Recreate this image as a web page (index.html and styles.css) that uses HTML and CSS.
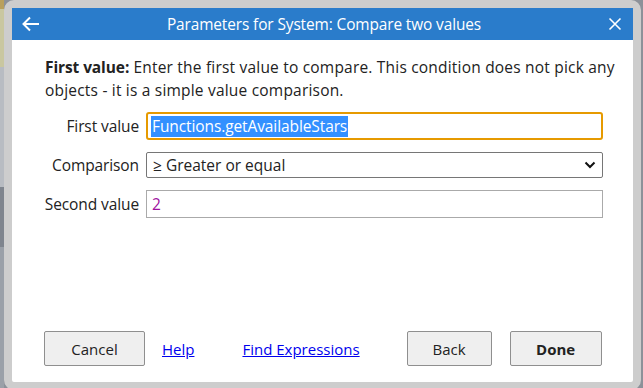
FILE: index.html
```html
<!DOCTYPE html>
<html lang="en">
<head>
  <meta charset="UTF-8">
  <title>Parameters for System: Compare two values</title>
  <link rel="stylesheet" href="styles.css">
</head>
<body>
  <div class="backdrop">
    <div class="strip"><i class="s1"></i><i class="s2"></i><i class="s3"></i><i class="s4"></i></div>
    <div class="frame">
      <div class="dialog">
        <header class="titlebar">
          <svg class="back" width="18" height="16" viewBox="0 0 18 16"><path d="M17 8H2M8 1.5L1.5 8 8 14.5" fill="none" stroke="#fff" stroke-width="2"/></svg>
          <h1>Parameters for System: Compare two values</h1>
          <svg class="close" width="14" height="14" viewBox="0 0 14 14"><path d="M1.5 1.5l11 11M12.5 1.5l-11 11" fill="none" stroke="#fff" stroke-width="1.6"/></svg>
        </header>

        <p class="desc"><b>First value:</b> Enter the first value to compare. This condition does not pick any objects - it is a simple value comparison.</p>

        <div class="params">
          <label>First value</label>
          <div class="field focused"><span class="sel">Functions.getAvailableStars</span></div>
          <label>Comparison</label>
          <div class="field combo">
            <span>≥ Greater or equal</span>
            <svg width="12" height="8" viewBox="0 0 12 8"><path d="M1.5 1.5L6 6l4.5-4.5" fill="none" stroke="#111" stroke-width="2"/></svg>
          </div>
          <label>Second value</label>
          <div class="field plain"><span class="num">2</span></div>
        </div>

        <footer class="buttons">
          <button class="btn cancel">Cancel</button>
          <a href="#" class="link help">Help</a>
          <a href="#" class="link">Find Expressions</a>
          <button class="btn back-btn">Back</button>
          <button class="btn done">Done</button>
        </footer>
      </div>
    </div>
  </div>
</body>
</html>
```
FILE: styles.css
```css
html, body {
  margin: 0;
  height: 100%;
  overflow: hidden;
}

body {
  font-family: "Open Sans", "Noto Sans", sans-serif;
  background: #8c9199;
  color: #222;
}

.backdrop {
  display: flex;
  height: 388px;
}

.strip {
  width: 4px;
  display: flex;
  flex-direction: column;
  background: #9aa0a8;
}

.strip i { display: block; }
.strip .s1 { height: 9px; background: #b9a05c; }
.strip .s2 { height: 58px; background: #c9c7a0; }
.strip .s3 { height: 120px; background: #b8bcc2; }
.strip .s4 { height: 60px; background: #7f858e; }

.frame {
  width: 621px;
  height: 374px;
  border: 8px solid #cdcdcd;
  border-radius: 10px;
  background: #fff;
}

.dialog {
  height: 100%;
  display: flex;
  flex-direction: column;
}

.titlebar {
  height: 32px;
  background: #2a7ccb;
  display: flex;
  align-items: center;
  padding: 0 8px 0 10px;
}

.titlebar h1 {
  flex: 1;
  margin: 0;
  text-align: center;
  font-size: 15.4px;
  font-weight: normal;
  color: #fff;
  letter-spacing: -0.1px;
}

.titlebar .close { margin-right: 3px; }

.desc {
  margin: 16px 6px 0 33px;
  font-size: 15.5px;
  line-height: 23px;
  letter-spacing: 0.2px;
}

.desc b { letter-spacing: -0.1px; }

.params {
  display: grid;
  grid-template-columns: 127px 457px;
  column-gap: 7px;
  row-gap: 12px;
  margin-top: 10px;
  align-items: center;
  font-size: 15.5px;
}

.params label {
  text-align: right;
  letter-spacing: -0.1px;
}

.field {
  box-sizing: border-box;
  height: 28px;
  display: flex;
  align-items: center;
  padding: 0 5px;
  border: 1px solid #aaa;
  background: #fff;
}

.field.focused {
  border: 2px solid #e69a00;
  border-radius: 3px;
  padding: 0 3px;
}

.sel {
  background: #3390ff;
  color: #fff;
  line-height: 21px;
  padding: 0 1px;
  letter-spacing: -0.1px;
}

.field.combo {
  height: 26px;
  border: 1px solid #767676;
  border-radius: 2px;
  justify-content: space-between;
  padding: 0 6px 0 6px;
}

.num { color: #a0119f; }

.buttons {
  margin-top: auto;
  margin-bottom: 16px;
  display: flex;
  align-items: center;
  padding-left: 32px;
  font-size: 15px;
}

.btn {
  font-family: inherit;
  font-size: 15px;
  color: #222;
  height: 35px;
  background: #efefef;
  border: 1px solid #8f8f8f;
  border-radius: 2px;
}

.cancel { width: 101px; }
.back-btn { width: 85px; margin-left: 47px; }
.done { width: 92px; margin-left: 18px; font-weight: bold; }

.link {
  color: #0000ee;
  text-decoration: underline;
}

.help { margin-left: 17px; margin-right: 48px; }
```
